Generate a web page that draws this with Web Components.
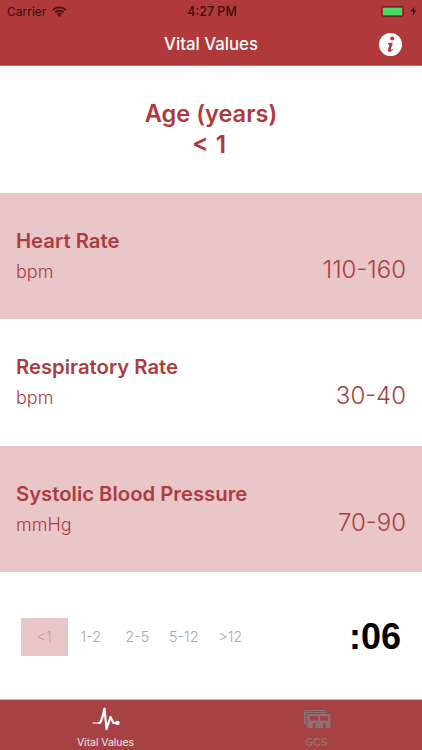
<!DOCTYPE html>
<html>
<head>
<meta charset="utf-8">
<title>Vital Values</title>
<style>
  html, body { margin: 0; padding: 0; background: #fff; }
  body { width: 422px; height: 750px; overflow: hidden; font-family: Inter, "Liberation Sans", Arial, sans-serif; }
  #app { display: flex; flex-direction: column; height: 750px; }
</style>
</head>
<body>
<div id="app">
  <app-header title="Vital Values"></app-header>
  <age-banner label="Age (years)" value="&lt; 1"></age-banner>
  <vital-row name="Heart Rate" unit="bpm" range="110-160" tinted></vital-row>
  <vital-row name="Respiratory Rate" unit="bpm" range="30-40"></vital-row>
  <vital-row name="Systolic Blood Pressure" unit="mmHg" range="70-90" tinted></vital-row>
  <age-picker timer=":06">
    <age-option selected>&lt;1</age-option>
    <age-option>1-2</age-option>
    <age-option>2-5</age-option>
    <age-option>5-12</age-option>
    <age-option>&gt;12</age-option>
  </age-picker>
  <tab-bar></tab-bar>
</div>

<script>
  "use strict";

  class AppHeader extends HTMLElement {
    constructor() {
      super()
      const title = this.getAttribute('title') || ''
      this.removeAttribute('title')
      this.attachShadow({ mode: 'open' })
      this.shadowRoot.innerHTML = `
      <style>
        :host { display: block; flex: none; height: 66px; background: #b0393c; box-shadow: inset 0 -1px 0 #c26a6c; }
        .status { height: 22px; display: grid; grid-template-columns: 1fr auto 1fr; align-items: center; padding: 0 5px 0 7px; color: #3a0d0f; font-size: 12px; }
        .status .left { display: flex; align-items: center; gap: 6px; }
        .status .time { font-weight: 500; font-size: 12.5px; }
        .status .right { display: flex; justify-content: flex-end; align-items: center; gap: 6px; }
        .batt { width: 19px; height: 7px; border: 1px solid #6e2022; border-radius: 2.5px; padding: 1px; box-sizing: content-box; display: flex; }
        .batt i { flex: 1; background: #4cd964; border-radius: 1px; }
        .nav { height: 44px; display: grid; grid-template-columns: 1fr auto 1fr; align-items: center; padding: 0 20px; color: #fff; }
        .nav .title { font-size: 16.8px; font-weight: 500; }
        .nav svg { justify-self: end; display: block; }
      </style>
      <div class="status">
        <div class="left">
          <span>Carrier</span>
          <svg width="15" height="11" viewBox="0 0 15 11" fill="none" stroke="#3a0d0f" stroke-width="1.7">
            <path d="M1 4 C4.6 .6 10.4 .6 14 4"/>
            <path d="M3.3 6.2 C5.7 4 9.3 4 11.7 6.2"/>
            <path d="M5.5 8.3 C6.7 7.3 8.3 7.3 9.5 8.3"/>
            <path d="M7.5 10.8 L6.3 9.5 L8.7 9.5 Z" fill="#3a0d0f" stroke-width=".6"/>
          </svg>
        </div>
        <span class="time">4:27 PM</span>
        <div class="right">
          <div class="batt"><i></i></div>
          <svg width="7" height="10" viewBox="0 0 8 10"><path d="M5 0 L1 5.6 H3.6 L3 10 L7 4.2 H4.4 Z" fill="#26090a"/></svg>
        </div>
      </div>
      <div class="nav">
        <span></span>
        <span class="title">${title}</span>
        <svg width="23" height="23" viewBox="0 0 23 23">
          <circle cx="11.5" cy="11.5" r="11.5" fill="#fff"/>
          <circle cx="13.2" cy="5.6" r="2" fill="#b0393c"/>
          <path d="M9 10 L13.8 9.4 L11.9 16.2 C11.7 17 12.4 17 13.6 15.9 L14.2 16.5 C12.6 18.4 11.3 19 10 18.8 C8.8 18.6 8.7 17.6 9 16.5 L10.4 11.6 L8.9 11.2 Z" fill="#b0393c"/>
        </svg>
      </div>`
    }
  }

  class AgeBanner extends HTMLElement {
    constructor() {
      super()
      this.attachShadow({ mode: 'open' })
      this.shadowRoot.innerHTML = `
      <style>
        :host { display: flex; flex: none; height: 126.6px; flex-direction: column; align-items: center; justify-content: center; box-sizing: border-box; background: #fff; color: #b0393c; font-size: 23.6px; font-weight: 600; line-height: 30.5px; text-align: center; }
        .value { word-spacing: 1px; font-size: 24.5px; padding-right: 4px; }
      </style>
      <div>${this.getAttribute('label')}</div>
      <div class="value">${this.getAttribute('value').replace('<', '&lt;')}</div>`
    }
  }

  class VitalRow extends HTMLElement {
    constructor() {
      super()
      this.attachShadow({ mode: 'open' })
      this.shadowRoot.innerHTML = `
      <style>
        :host { display: grid; flex: none; height: 126.6px; box-sizing: border-box; padding: 35px 16px 0 16px; grid-template-columns: 1fr auto; grid-template-rows: 25px 37px; align-content: start; color: #ad3c40; background: #fff; }
        :host([tinted]) { background: #e9c6c7; }
        .name { grid-column: 1 / 3; font-size: 20.3px; font-weight: 600; line-height: 25px; }
        .unit { font-size: 18px; font-weight: 350; line-height: 37px; }
        .range { font-size: 24px; font-weight: 300; line-height: 33px; }
      </style>
      <div class="name">${this.getAttribute('name')}</div>
      <div class="unit">${this.getAttribute('unit')}</div>
      <div class="range">${this.getAttribute('range')}</div>`
    }
  }

  class AgeOption extends HTMLElement {
    constructor() {
      super()
      this.attachShadow({ mode: 'open' })
      this.shadowRoot.innerHTML = `
      <style>
        :host { display: flex; width: 46.5px; height: 38px; align-items: center; justify-content: center; color: #a9a9a9; font-size: 14.4px; font-weight: 300; }
        :host([selected]) { background: #e9c6c7; color: #bda2a2; }
      </style>
      <slot></slot>`
    }
  }

  class AgePicker extends HTMLElement {
    constructor() {
      super()
      this.attachShadow({ mode: 'open' })
      this.shadowRoot.innerHTML = `
      <style>
        :host { display: flex; flex: none; height: 126.6px; box-sizing: border-box; padding: 2px 21px 0; align-items: center; justify-content: space-between; background: #fff; }
        .options { display: flex; }
        .timer { color: #000; font-family: "Liberation Sans", Arial, sans-serif; font-size: 36px; font-weight: 700; }
      </style>
      <div class="options"><slot></slot></div>
      <div class="timer">${this.getAttribute('timer')}</div>`
    }
  }

  class TabBar extends HTMLElement {
    constructor() {
      super()
      this.attachShadow({ mode: 'open' })
      this.shadowRoot.innerHTML = `
      <style>
        :host { display: grid; flex: 1; grid-template-columns: 1fr 1fr; background: #a64144; border-top: 1px solid #d6b4b4; font-size: 10.4px; }
        .tab { display: flex; flex-direction: column; align-items: center; padding-top: 6px; color: #f6e8e8; }
        .tab.off { color: #a07a7c; }
        svg { display: block; height: 24px; }
        span { line-height: 12px; margin-top: 7.5px; }
      </style>
      <div class="tab">
        <svg width="28" height="24" viewBox="0 0 28 24" fill="none" stroke="#fff" stroke-width="2.2" stroke-linejoin="round" stroke-linecap="round">
          <path d="M7 17 C9 17 10 14 12.5 2.5 L14.5 23 L18.5 11 L21.5 17 H25.5" />
          <path d="M1 17 H7" stroke-width="1.2" />
          <circle cx="25.5" cy="17" r="2.2" fill="#fff" stroke="none"/>
        </svg>
        <span>Vital Values</span>
      </div>
      <div class="tab off">
        <svg width="28" height="24" viewBox="0 0 28 24" fill="none" stroke="#8f7074" stroke-width="1">
          <path d="M1.5 18 V4.5 H22"/>
          <path d="M3 20 V6.5 H24"/>
          <rect x="4.5" y="8" width="23" height="14" fill="#8f7074" stroke="none"/>
          <rect x="7" y="10" width="8" height="4.5" fill="#a64144" stroke="none"/>
          <rect x="17" y="10" width="8" height="4.5" fill="#a64144" stroke="none"/>
          <rect x="10" y="17" width="2.5" height="5" fill="#a64144" stroke="none"/>
          <rect x="20" y="17" width="2.5" height="5" fill="#a64144" stroke="none"/>
        </svg>
        <span>GCS</span>
      </div>`
    }
  }

  customElements.define('app-header', AppHeader)
  customElements.define('age-banner', AgeBanner)
  customElements.define('vital-row', VitalRow)
  customElements.define('age-option', AgeOption)
  customElements.define('age-picker', AgePicker)
  customElements.define('tab-bar', TabBar)
</script>
</body>
</html>
